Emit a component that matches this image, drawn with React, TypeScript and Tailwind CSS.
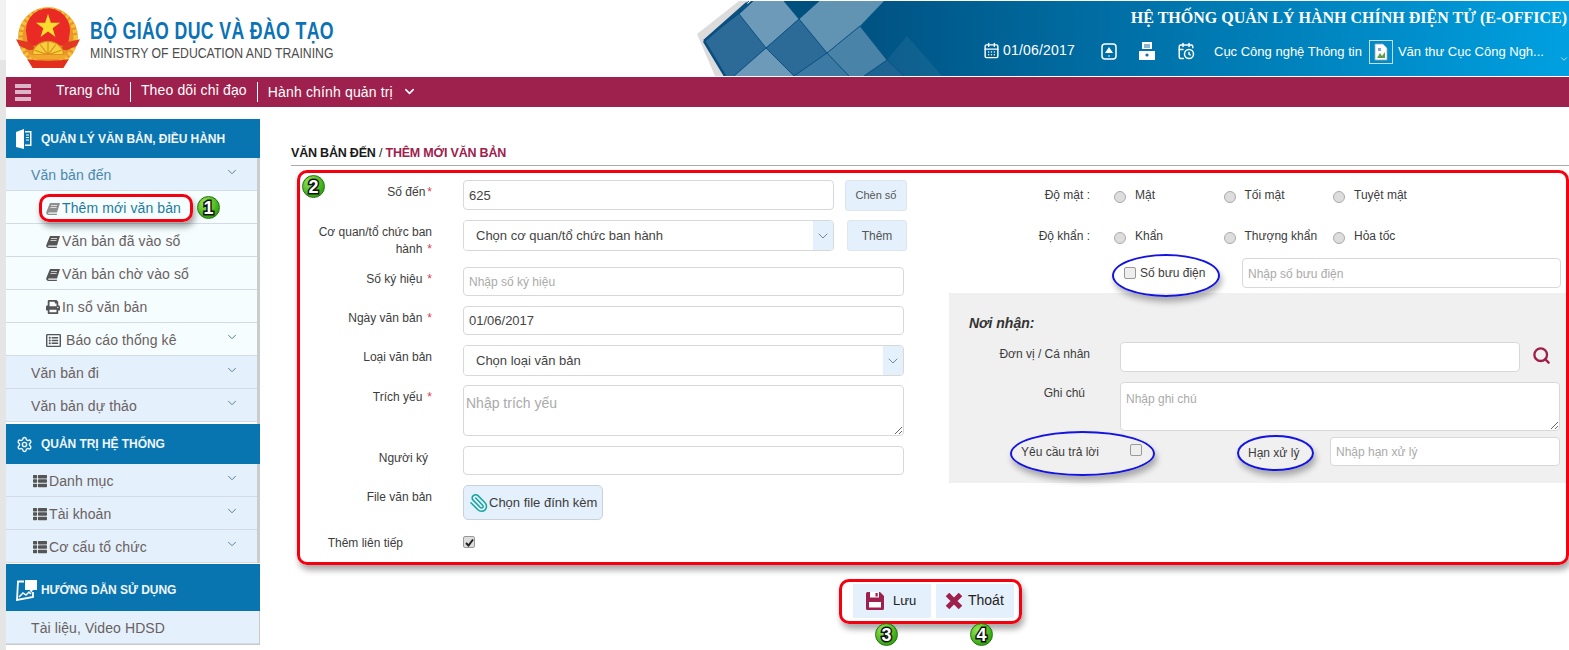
import type { ReactNode } from "react";
import { CalendarClock, CalendarDays, ChevronDown, Paperclip, Search, Settings } from "lucide-react";
import { FaPrint, FaRegListAlt, FaThList } from "react-icons/fa";

function Emblem() {
  return (
    <svg width="64" height="62" viewBox="3 0 58 56">
      <circle cx="32" cy="28" r="27" fill="#e8952a" />
      <circle cx="32" cy="28" r="25" fill="none" stroke="#f6c23a" strokeWidth="4" strokeDasharray="3 2" />
      <path d="M12 22a20 20 0 0 1 40 0l-2 14H14z" fill="#ea2a24" />
      <polygon points="32,7 34.6,15 43,15 36.2,20 38.8,28 32,23 25.2,28 27.8,20 21,15 29.4,15" fill="#fbdc2e" />
      <path d="M3 30l13 3 5 6-6 1-9-4zM61 30l-13 3-5 6 6 1 9-4z" fill="#e23a22" />
      <path d="M18 44a14 12 0 0 1 28 0z" fill="#f7cf3c" stroke="#d98a1c" strokeWidth="1" />
      <path d="M32 32v12M25 35l7 9M39 35l-7 9M20 40l12 4M44 40l-12 4" stroke="#d98a1c" strokeWidth="1" />
      <path d="M14 44h36l-4 4H18z" fill="#f2a82c" />
      <path d="M13 48c8 2 30 2 38 0l-5 8H18z" fill="#e2301f" />
    </svg>
  );
}

function BannerArt() {
  return (
    <svg className="absolute left-0 top-0" width="300" height="75" viewBox="0 0 300 75">
      {/* white corners left of the lattice, the banner gradient runs under them */}
      <polygon points="0,0 54,0 6,40 28,75 0,75" fill="#ffffff" />
      <polygon points="0,33 42,0 52,0 7,40 28,75 18,75" fill="#dcdcdc" />
      <polygon points="7,40 42,13 69,47 37,75 28,75" fill="#2c6a97" />
      <polygon points="42,13 56,0 87,0 102,18 69,47" fill="#6d9ab8" />
      <polygon points="69,47 102,18 130,52 97,75" fill="#2c6a97" />
      <polygon points="102,18 122,0 187,0 163,25 130,52" fill="#6193b3" />
      <polygon points="37,75 69,47 97,75" fill="#6d9ab8" />
      <polygon points="97,75 130,52 152,75" fill="#3d7aa3" />
      <polygon points="130,52 163,25 190,59 167,75 152,75" fill="#4a83a8" />
      <polygon points="167,75 190,59 207,75" fill="#1d6492" />
      <polygon points="190,59 210,35 245,75 207,75" fill="#ffffff" fillOpacity="0.06" />
      <path
        d="M7 40L52 0M42 13L69 47L102 18L87 0M69 47L37 75M102 18L130 52L163 25M130 52L97 75M69 47L97 75M130 52L152 75M163 25L190 59L167 75M190 59L207 75M122 0L102 18M56 0L42 13"
        fill="none"
        stroke="#0d5283"
        strokeWidth="1"
      />
      <path d="M7 40L50 2M7 40L28 75" stroke="#0b4f80" strokeWidth="2.5" fill="none" />
    </svg>
  );
}

function BookIcon({ light }: { light?: boolean }) {
  const c = light ? "#8f8f8f" : "#555555";
  return (
    <svg width="14" height="13" viewBox="0 0 14 13" className="shrink-0">
      <path d="M4 1h10l-3 9.500H2.600C2 10.500 1.800 11.700 2.800 11.700H11L10.700 13H2.500C.8 13-.2 11.500.4 9.800z" fill={c} />
      <path d="M5 3.500h6M4.500 5.500h6" stroke="#ffffff" strokeWidth=".7" />
    </svg>
  );
}

function DoorIcon() {
  return (
    <svg width="16" height="20" viewBox="0 0 16 20">
      <path d="M0 3l8-3v20l-8-2z" fill="#ffffff" />
      <path d="M9 2h6.500v15H9v-1.500h5V3.500H9z" fill="#ffffff" />
      <path d="M10 6h3M10 8.500h3M10 11h3" stroke="#ffffff" strokeWidth="1" />
    </svg>
  );
}

function GuideIcon() {
  return (
    <svg width="21" height="21" viewBox="0 0 21 21">
      <path d="M8 1.500H2L1 20l16-3v-5" fill="none" stroke="#ffffff" strokeWidth="1.800" />
      <path d="M9 0h12v10h-4l-2 3-1-3H9z" fill="#ffffff" />
      <path d="M3 17l4-4 3 2 3-3 2 2" fill="none" stroke="#ffffff" strokeWidth="1.500" />
    </svg>
  );
}

function SaveIcon() {
  return (
    <svg width="18" height="18" viewBox="0 0 18 18" className="shrink-0">
      <path d="M0 1.500A1.500 1.500 0 0 1 1.500 0H14l4 4v12.500a1.500 1.500 0 0 1-1.500 1.500h-15A1.500 1.500 0 0 1 0 16.500z" fill="#9e214d" />
      <rect x="4" y="0" width="9" height="5.500" fill="#ffffff" />
      <rect x="9.500" y="1" width="2.200" height="3.500" fill="#9e214d" />
      <rect x="3" y="10" width="12" height="5.500" fill="#ffffff" />
    </svg>
  );
}

function CrossIcon() {
  return (
    <svg width="18" height="18" viewBox="0 0 18 18" className="shrink-0">
      <path d="M2.500 2.500l13 13M15.500 2.500l-13 13" stroke="#9e214d" strokeWidth="5" />
    </svg>
  );
}

function SideHeader({ icon, title, height, pad }: { icon: ReactNode; title: string; height: string; pad?: string }) {
  return (
    <div className={`flex items-center bg-[#0875b1] pl-[10px] text-[12px] font-bold tracking-[-0.05px] text-[#f0f6fb] ${height} ${pad ?? ""}`}>
      <span className="flex w-[25px] justify-start">{icon}</span>
      <span>{title}</span>
    </div>
  );
}

function SideRow({
  label,
  icon,
  chevron,
  child,
  active,
  pad,
  gap,
  textColor,
}: {
  label: string;
  icon?: ReactNode;
  chevron?: boolean;
  child?: boolean;
  active?: boolean;
  pad: string;
  gap?: string;
  textColor?: string;
}) {
  return (
    <div
      className={`flex h-[33px] items-center border-b border-[#d3dce6] pt-[2px] text-[14px] tracking-[0.1px] ${pad} ${
        child ? "bg-[#f5fdff]" : "bg-[#e4f0fb]"
      } ${textColor ?? (active ? "text-[#4a89ad]" : "text-[#6a6060]")}`}
    >
      {icon}
      <span className={gap}>{label}</span>
      {chevron && <ChevronDown size={14} strokeWidth={1.5} className="ml-auto mr-[18px] mt-[-6px] text-[#4a6f8a]" />}
    </div>
  );
}

function Sidebar() {
  return (
    <aside className="mt-[12px] w-[254px] shrink-0">
      <SideHeader icon={<DoorIcon />} title="QUẢN LÝ VĂN BẢN, ĐIỀU HÀNH" height="h-[39px]" />
      <div className="border-r-[3px] border-[#cccccc] pb-[2px]">
        <SideRow label="Văn bản đến" chevron active pad="pl-[25px]" />
        <SideRow
          label="Thêm mới văn bản"
          icon={<BookIcon light />}
          child
          pad="pl-[40px]"
          gap="ml-[2px]"
          textColor="text-[#1e7b9e]"
        />
        <SideRow label="Văn bản đã vào sổ" icon={<BookIcon />} child pad="pl-[40px]" gap="ml-[2px]" />
        <SideRow label="Văn bản chờ vào sổ" icon={<BookIcon />} child pad="pl-[40px]" gap="ml-[2px]" />
        <SideRow
          label="In sổ văn bản"
          icon={<FaPrint size={14} className="text-[#555555]" />}
          child
          pad="pl-[40px]"
          gap="ml-[2px]"
        />
        <SideRow
          label="Báo cáo thống kê"
          icon={<FaRegListAlt size={15} className="text-[#555555]" />}
          child
          chevron
          pad="pl-[40px]"
          gap="ml-[5px]"
        />
        <SideRow label="Văn bản đi" chevron pad="pl-[25px]" />
        <SideRow label="Văn bản dự thảo" chevron pad="pl-[25px]" />
      </div>
      <SideHeader icon={<Settings size={17} />} title="QUẢN TRỊ HỆ THỐNG" height="h-[40px]" />
      <div className="border-r-[3px] border-[#cccccc]">
        {["Danh mục", "Tài khoản", "Cơ cấu tổ chức"].map((label) => (
          <SideRow
            key={label}
            label={label}
            icon={<FaThList size={14} className="text-[#555555]" />}
            chevron
            pad="pl-[27px]"
            gap="ml-[2px]"
          />
        ))}
      </div>
      <div className="h-px bg-white" />
      <SideHeader icon={<GuideIcon />} title="HƯỚNG DẪN SỬ DỤNG" height="h-[47px]" pad="pt-[5px]" />
      <div className="border-b border-r border-[#c9c9c9]">
        <SideRow label="Tài liệu, Video HDSD" pad="pl-[25px]" />
      </div>
    </aside>
  );
}

function Header() {
  return (
    <header className="flex h-[77px] bg-white pb-px">
      <div className="flex w-[691px] shrink-0 pl-[10px] pt-[6px]">
        <Emblem />
        <div className="ml-[10px] whitespace-nowrap pt-[10px]">
          <div className="origin-left scale-x-[0.737] text-[24px] font-bold leading-[30px] tracking-[0.5px] text-[#0b72b5]">
            BỘ GIÁO DỤC VÀ ĐÀO TẠO
          </div>
          <div className="origin-left scale-x-[0.875] text-[14px] leading-[14px] text-[#4c4c4c]">
            MINISTRY OF EDUCATION AND TRAINING
          </div>
        </div>
      </div>
      <div className="relative mt-px flex-1 overflow-hidden bg-[linear-gradient(90deg,#00507f_0px,#00507f_140px,#006295_300px,#0078b0_500px,#00a0e0_100%)]">
        <BannerArt />
        <div className="relative flex h-full flex-col items-end text-white">
          <div className="pr-[2px] pt-[7px] font-['Liberation_Serif',serif] text-[16px] font-bold leading-[20px]">
            HỆ THỐNG QUẢN LÝ HÀNH CHÍNH ĐIỆN TỬ (E-OFFICE)
          </div>
          <div className="mt-[12px] flex h-[24px] items-center self-stretch pl-[286px] text-[13px]">
            <CalendarDays size={17} className="mb-[3px] shrink-0" />
            <span className="mb-[4px] ml-[3px] w-[98px] text-[14px] tracking-[0.2px]">01/06/2017</span>
            <svg width="16" height="17" viewBox="0 0 16 17" className="mb-[2px] shrink-0">
              <rect x="1" y="1" width="14" height="15" rx="3" fill="none" stroke="#ffffff" strokeWidth="1.500" />
              <polygon points="8,4 12,10 4,10" fill="#ffffff" />
              <circle cx="8" cy="13" r=".8" fill="#ffffff" />
            </svg>
            <svg width="16" height="18" viewBox="0 0 16 18" className="mb-[2px] ml-[22px] shrink-0">
              <path d="M3 0h10v7H3zM0 9h16v9H0z" fill="#ffffff" />
              <path d="M5 3h6M5 5h6" stroke="#1a6f9f" strokeWidth="1" />
              <circle cx="8" cy="13" r="1.600" fill="#1a6f9f" />
            </svg>
            <CalendarClock size={18} className="mb-[2px] ml-[22px] shrink-0" />
            <span className="ml-[19px]">Cục Công nghệ Thông tin</span>
            <div className="ml-[7px] flex h-[24px] w-[24px] shrink-0 items-center justify-center border border-[#c7dcea]">
              <svg width="14" height="18" viewBox="0 0 14 18">
                <path d="M1 1h8l4 4v12H1z" fill="#ffffff" stroke="#9aa9b5" strokeWidth=".8" />
                <path d="M3 15l3-5 2 3 3-4v6z" fill="#5aa04a" />
                <path d="M4 5h3v3H4z" fill="#7aa9d8" />
              </svg>
            </div>
            <span className="ml-[5px]">Văn thư Cục Công Ngh...</span>
            <ChevronDown size={10} className="ml-[15px] mt-[14px] text-[#cde3f0]" />
          </div>
        </div>
      </div>
    </header>
  );
}

function NavBar() {
  return (
    <nav className="flex h-[30px] items-center bg-[#9e214d] text-[14px] tracking-[0.15px] text-white">
      <div className="ml-[9px] flex w-[16px] flex-col gap-[2.500px]">
        <span className="h-[4px] bg-[#dcb5c6]" />
        <span className="h-[4px] bg-[#dcb5c6]" />
        <span className="h-[4px] bg-[#dcb5c6]" />
      </div>
      <span className="mb-[3px] ml-[25px]">Trang chủ</span>
      <span className="ml-[10px] h-[20px] w-px bg-white" />
      <span className="mb-[3px] ml-[10px]">Theo dõi chỉ đạo</span>
      <span className="ml-[10px] h-[20px] w-px bg-white" />
      <span className="ml-[10px]">Hành chính quản trị</span>
      <ChevronDown size={15} strokeWidth={2.5} className="mb-[1px] ml-[9px]" />
    </nav>
  );
}

const inputCls =
  "h-full w-full rounded-[4px] border border-[#d8d8d8] bg-white px-[5px] text-[13px] text-[#444444] outline-none placeholder:text-[12px] placeholder:text-[#aaaaaa]";

function Req({ spaced = true }: { spaced?: boolean }) {
  return <span className={`${spaced ? "ml-[5px]" : "ml-[2px]"} text-[#d9414f]`}>*</span>;
}

function FormRow({
  label,
  className,
  labelPad,
  children,
}: {
  label: ReactNode;
  className?: string;
  labelPad?: string;
  children: ReactNode;
}) {
  return (
    <div className={`flex ${className ?? ""}`}>
      <div className={`w-[134px] shrink-0 text-right text-[12px] leading-[17px] text-[#3c3c3c] ${labelPad ?? "pt-[4px]"}`}>
        {label}
      </div>
      <div className="ml-[31px] flex h-full">{children}</div>
    </div>
  );
}

function SelectBox({ text, width, height }: { text: string; width: string; height: string }) {
  return (
    <div className={`flex overflow-hidden rounded-[4px] border border-[#d8d8d8] bg-white ${width} ${height}`}>
      <select className="min-w-0 flex-1 appearance-none bg-white pl-[12px] text-[13px] text-[#444444] outline-none">
        <option>{text}</option>
      </select>
      <span className="flex w-[20px] items-center justify-center bg-[#e4f0fb]">
        <ChevronDown size={16} strokeWidth={1.2} className="text-[#5a6b78]" />
      </span>
    </div>
  );
}

function SmallBtn({ label, className }: { label: string; className: string }) {
  return (
    <button type="button" className={`h-[31px] rounded-[3px] border border-[#dde6ee] bg-[#e4f0fb] text-[#555555] ${className}`}>
      {label}
    </button>
  );
}

function Radio({ label }: { label: string }) {
  return (
    <label className="flex w-[109.500px] items-center text-[12px] text-[#3c3c3c]">
      <input type="radio" name={label} className="mt-[3px] h-[12px] w-[12px] appearance-none rounded-full border border-[#aaaaaa] bg-[#dddddd]" />
      <span className="ml-[9px]">{label}</span>
    </label>
  );
}

function LeftColumn() {
  return (
    <div className="w-[608px] shrink-0">
      <FormRow label={<>Số đến<Req spaced={false} /></>} className="h-[30px]">
        <div className="h-[30px] w-[371px]"><input defaultValue="625" className={inputCls} /></div>
        <SmallBtn label="Chèn số" className="ml-[11px] w-[62px] text-[11px]" />
      </FormRow>
      <FormRow label={<>Cơ quan/tổ chức ban<br />hành<Req /></>} className="mt-[10px] h-[31px]">
        <SelectBox text="Chọn cơ quan/tổ chức ban hành" width="w-[371px]" height="h-[31px]" />
        <SmallBtn label="Thêm" className="ml-[13px] w-[60px] text-[12px]" />
      </FormRow>
      <FormRow label={<>Số ký hiệu<Req /></>} className="mt-[16px] h-[29px]">
        <div className="w-[441px]"><input placeholder="Nhập số ký hiệu" className={inputCls} /></div>
      </FormRow>
      <FormRow label={<>Ngày văn bản<Req /></>} className="mt-[10px] h-[29px]">
        <div className="w-[441px]"><input defaultValue="01/06/2017" className={inputCls} /></div>
      </FormRow>
      <FormRow label="Loại văn bản" className="mt-[10px] h-[30px]">
        <SelectBox text="Chọn loại văn bản" width="w-[441px]" height="h-[31px]" />
      </FormRow>
      <FormRow label={<>Trích yếu<Req /></>} className="mt-[10px] h-[51px]">
        <div className="w-[441px]">
          <textarea
            placeholder="Nhập trích yếu"
            className="block h-full w-full rounded-[4px] border border-[#d8d8d8] bg-white px-[2px] pt-[7px] text-[14px] outline-none placeholder:text-[#aaaaaa]"
          />
        </div>
      </FormRow>
      <FormRow label="Người ký" labelPad="pt-[4px] pr-[4px]" className="mt-[10px] h-[29px]">
        <div className="w-[441px]"><input className={inputCls} /></div>
      </FormRow>
      <FormRow label="File văn bản" className="mt-[10px] h-[35px]">
        <button type="button" className="flex h-[35px] w-[140px] items-center rounded-[5px] border border-[#c9d2da] bg-[#e4f0fb] pl-[5px] text-[13px] text-[#3c3c3c]">
          <Paperclip size={20} strokeWidth={1.8} className="scale-x-[-1] text-[#14a5a0]" />
          <span>Chọn file đính kèm</span>
        </button>
      </FormRow>
      <FormRow label="Thêm liên tiếp" labelPad="pr-[29px]" className="mt-[15px] h-[17px]">
        <span className="mt-[1px] flex h-[12px] w-[12px] items-center justify-center rounded-[2px] border border-[#999999] bg-[#dddddd]">
          <svg width="9" height="9" viewBox="0 0 9 9">
            <path d="M1 5l2.500 2.500L8 1.500" fill="none" stroke="#222222" strokeWidth="2" />
          </svg>
        </span>
      </FormRow>
    </div>
  );
}

function RightColumn() {
  return (
    <div className="ml-[42px] flex-1">
      <div className="flex h-[30px] items-center">
        <span className="mt-[-1px] w-[142px] text-right text-[12px] text-[#3c3c3c]">Độ mật :</span>
        <div className="ml-[24px] flex">
          {["Mật", "Tối mật", "Tuyệt mật"].map((r) => <Radio key={r} label={r} />)}
        </div>
      </div>
      <div className="mt-[11px] flex h-[30px] items-center">
        <span className="mt-[-1px] w-[142px] text-right text-[12px] text-[#3c3c3c]">Độ khẩn :</span>
        <div className="ml-[24px] flex">
          {["Khẩn", "Thượng khẩn", "Hỏa tốc"].map((r) => <Radio key={r} label={r} />)}
        </div>
      </div>
      <div className="mt-[7px] flex h-[30px] items-center">
        <span className="ml-[176px] h-[12px] w-[12px] rounded-[2px] border border-[#999999] bg-[#eeeeee]" />
        <span className="ml-[4px] w-[102px] text-[12px] text-[#3c3c3c]">Số bưu điện</span>
        <div className="h-full w-[319px]"><input placeholder="Nhập số bưu điện" className={inputCls} /></div>
      </div>
      <div className="ml-px mt-[5px] h-[190px] bg-[#f0f0f0]">
        <div className="pl-[20px] pt-[22px] text-[14px] font-bold italic leading-[16px] text-[#333333]">Nơi nhận:</div>
        <div className="mt-[11px] flex h-[30px]">
          <span className="w-[141px] pt-[3px] text-right text-[12px] text-[#3c3c3c]">Đơn vị / Cá nhân</span>
          <div className="ml-[30px] w-[400px]"><input className={inputCls} /></div>
          <Search size={19} strokeWidth={3} className="ml-[12px] mt-[4px] text-[#9e214d]" />
        </div>
        <div className="mt-[10px] flex h-[49px]">
          <span className="w-[141px] pr-[5px] pt-[2px] text-right text-[12px] text-[#3c3c3c]">Ghi chú</span>
          <div className="ml-[30px] w-[440px]"><textarea placeholder="Nhập ghi chú" className={`${inputCls} block pt-[7px]`} /></div>
        </div>
        <div className="mt-[6px] flex h-[29px]">
          <span className="ml-[72px] w-[109px] pt-[6px] text-[12px] text-[#3c3c3c]">Yêu cầu trả lời</span>
          <span className="mt-[7px] h-[12px] w-[12px] rounded-[2px] border border-[#999999] bg-[#eeeeee]" />
          <span className="ml-[106px] w-[82px] pt-[7px] text-[12px] text-[#3c3c3c]">Hạn xử lý</span>
          <div className="w-[230px]"><input placeholder="Nhập hạn xử lý" className={`${inputCls} bg-[#fafafa]`} /></div>
        </div>
      </div>
    </div>
  );
}

function Badge({ n, className }: { n: number; className: string }) {
  return (
    <span
      className={`absolute flex h-[23px] w-[23px] items-center justify-center rounded-full border border-[#24720f] bg-[radial-gradient(circle_at_35%_30%,#9bea55,#35a814_70%)] ${className}`}
    >
      <span className="text-[18px] font-bold leading-none text-white [-webkit-text-stroke:3px_#111111] [paint-order:stroke_fill]">
        {n}
      </span>
    </span>
  );
}

function Annotations() {
  const red = "absolute rounded-[10px] border-[3px] border-[#f5000e] shadow-[2px_5px_6px_rgba(0,0,0,0.35)]";
  const blue = "absolute rounded-[50%] border-2 border-[#1414e0] shadow-[2px_5px_6px_rgba(0,0,0,0.3)]";
  return (
    <>
      <div className={`${red} left-[39px] top-[194px] h-[28px] w-[154px]`} />
      <div className={`${red} left-[297px] top-[170px] h-[395px] w-[1272px]`} />
      <div className={`${red} left-[839px] top-[579px] h-[45px] w-[183px]`} />
      <div className={`${blue} left-[1112px] top-[254px] h-[43px] w-[108px]`} />
      <div className={`${blue} left-[1010px] top-[431px] h-[45px] w-[145px]`} />
      <div className={`${blue} left-[1237px] top-[435px] h-[36px] w-[77px]`} />
      <Badge n={1} className="left-[197px] top-[196px]" />
      <Badge n={2} className="left-[302px] top-[175px]" />
      <Badge n={3} className="left-[875px] top-[623px]" />
      <Badge n={4} className="left-[970px] top-[623px]" />
    </>
  );
}

export default function App() {
  return (
    <div className="relative flex h-[650px] w-[1569px] overflow-hidden bg-white font-['Liberation_Sans',Arial,sans-serif]">
      <div className="w-[6px] shrink-0 bg-[linear-gradient(180deg,#f2f2f2_0px,#f2f2f2_60px,#e5e5e5_60px)]" />
      <div className="min-w-0 flex-1">
        <Header />
        <NavBar />
        <div className="flex">
          <Sidebar />
          <main className="min-w-0 flex-1 pl-[31px] pt-[38px]">
            <div className="border-b border-[#aaaaaa] pb-[3px] text-[12.5px] font-bold leading-[17px] tracking-[-0.2px] text-[#1a1a1a]">
              VĂN BẢN ĐẾN <span className="font-normal">/</span> <span className="text-[#9e214d]">THÊM MỚI VĂN BẢN</span>
            </div>
            <form className="mt-[14px] flex pl-[7px]">
              <LeftColumn />
              <RightColumn />
            </form>
            <div className="mt-[32px] flex pl-[562px] text-[13px] text-[#222222]">
              <button type="button" className="flex h-[34px] w-[78px] items-center bg-[#e4f0fb] pl-[13px]">
                <SaveIcon />
                <span className="ml-[9px]">Lưu</span>
              </button>
              <button type="button" className="ml-[5px] flex h-[34px] w-[78px] items-center bg-[#e4f0fb] pl-[9px]">
                <CrossIcon />
                <span className="mb-[2px] ml-[5px] text-[14px]">Thoát</span>
              </button>
            </div>
          </main>
        </div>
      </div>
      <Annotations />
    </div>
  );
}
